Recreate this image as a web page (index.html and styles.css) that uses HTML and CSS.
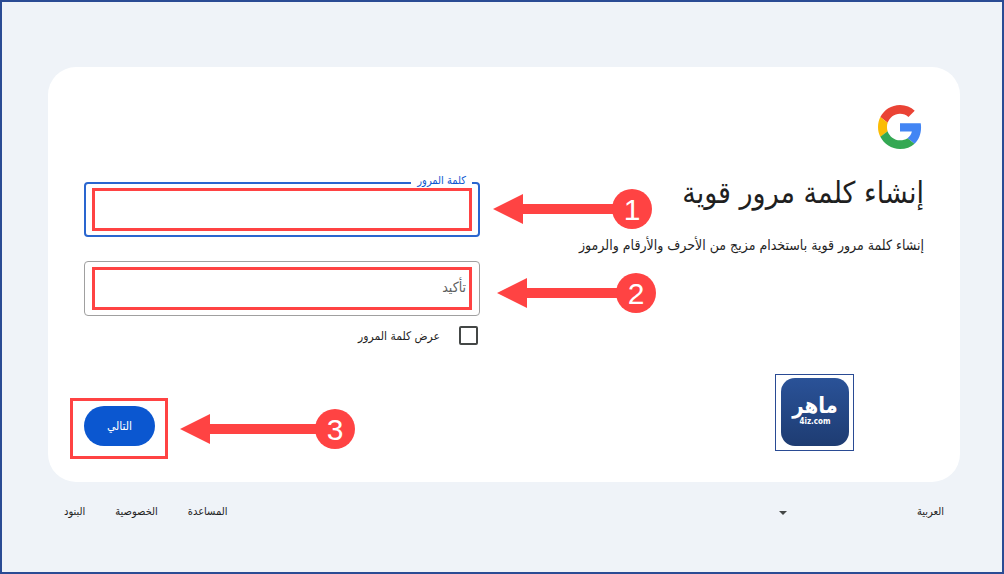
FILE: index.html
```
<!DOCTYPE html>
<html lang="ar" dir="rtl">
<head>
    <meta charset="UTF-8">
    <meta name="viewport" content="width=device-width, initial-scale=1.0">
    <title>إنشاء كلمة مرور قوية</title>
    <link rel="stylesheet" href="styles.css">
</head>
<body>
    <main class="card">
        <section class="intro">
            <svg class="google-logo" viewBox="0 0 48 48" role="img" aria-label="Google">
                <path fill="#EA4335" d="M24 9.5c3.54 0 6.71 1.22 9.21 3.6l6.85-6.85C35.9 2.38 30.47 0 24 0 14.62 0 6.51 5.38 2.56 13.22l7.98 6.19C12.43 13.72 17.74 9.5 24 9.5z"/>
                <path fill="#4285F4" d="M46.98 24.55c0-1.57-.15-3.09-.38-4.55H24v9.02h12.94c-.58 2.96-2.26 5.48-4.78 7.18l7.73 6c4.51-4.18 7.09-10.36 7.09-17.65z"/>
                <path fill="#FBBC05" d="M10.53 28.59c-.48-1.45-.76-2.99-.76-4.59s.27-3.14.76-4.59l-7.98-6.19C.92 16.46 0 20.12 0 24c0 3.88.92 7.54 2.56 10.78l7.97-6.19z"/>
                <path fill="#34A853" d="M24 48c6.48 0 11.93-2.13 15.89-5.81l-7.73-6c-2.15 1.45-4.92 2.3-8.16 2.3-6.26 0-11.57-4.22-13.47-9.91l-7.98 6.19C6.51 42.62 14.62 48 24 48z"/>
            </svg>
            <h1>إنشاء كلمة مرور قوية</h1>
            <p>إنشاء كلمة مرور قوية باستخدام مزيج من الأحرف والأرقام والرموز</p>
            <div class="brand">
                <div class="brand-tile">
                    <span class="brand-name">ماهر</span>
                    <span class="brand-url" dir="ltr">4iz.com</span>
                </div>
            </div>
        </section>

        <form class="form">
            <div class="field field-active">
                <input type="password" id="password">
                <label for="password">كلمة المرور</label>
                <span class="mark mark-input"></span>
                <div class="arrow arrow-one" dir="ltr"><i class="head"></i><i class="shaft"></i><b>1</b></div>
            </div>
            <div class="field">
                <input type="password" id="confirm">
                <label for="confirm">تأكيد</label>
                <span class="mark mark-input"></span>
                <div class="arrow arrow-two" dir="ltr"><i class="head"></i><i class="shaft"></i><b>2</b></div>
            </div>
            <div class="show">
                <input type="checkbox" id="show">
                <label for="show">عرض كلمة المرور</label>
            </div>
            <div class="actions">
                <button type="button">التالي</button>
                <span class="mark mark-button"></span>
                <div class="arrow arrow-three" dir="ltr"><i class="head"></i><i class="shaft"></i><b>3</b></div>
            </div>
        </form>
    </main>

    <footer>
        <div class="language">
            <select aria-label="اللغة">
                <option>العربية</option>
            </select>
            <i class="caret"></i>
        </div>
        <nav>
            <a href="#">المساعدة</a>
            <a href="#">الخصوصية</a>
            <a href="#">البنود</a>
        </nav>
    </footer>
</body>
</html>
```

FILE: styles.css
```
* {
    box-sizing: border-box;
}
body {
    margin: 0;
    min-height: 100vh;
    padding: 65px 42px 0 46px;
    border: 2px solid #2a4b94;
    background: #eff3f8;
    color: #1f1f1f;
    font-family: "DejaVu Sans Condensed", "DejaVu Sans", sans-serif;
    font-size: 11px;
}
button, input, select {
    font: inherit;
    color: inherit;
}

/* card */
.card {
    display: grid;
    grid-template-columns: 1fr 1fr;
    gap: 48px;
    padding: 38px 36px 31px;
    border-radius: 28px;
    background: #fff;
}
.intro {
    display: flex;
    flex-direction: column;
    align-items: flex-start;
}
.google-logo {
    width: 44px;
    height: 44px;
    margin: 0 2px;
}
h1 {
    margin: 24px 0 0;
    font-size: 30px;
    font-weight: 400;
    line-height: 40px;
    white-space: nowrap;
}
p {
    margin: 20px 0 0;
    font-size: 14px;
    line-height: 24px;
    white-space: nowrap;
}

/* brand stamp */
.brand {
    margin: 117px 70px 0;
    padding: 3px 4px 4px 5px;
    border: 1px solid #2a4b94;
}
.brand-tile {
    display: flex;
    flex-direction: column;
    align-items: center;
    width: 68px;
    height: 68px;
    padding-top: 16px;
    border-radius: 14px;
    background: linear-gradient(#2a5298, #1e3c72);
    color: #fff;
}
.brand-name {
    font-size: 22px;
    font-weight: 700;
    line-height: 24px;
}
.brand-url {
    font-size: 8px;
    font-weight: 700;
    line-height: 8px;
}

/* form */
.form {
    padding-top: 77px;
}
.field {
    position: relative;
    margin-bottom: 24px;
}
.field input {
    display: block;
    width: 100%;
    height: 55px;
    padding: 0 16px;
    border: 1px solid #a0a0a0;
    border-radius: 4px;
    background: #fff;
    font-size: 14px;
    outline: none;
}
.field label {
    position: absolute;
    top: 14px;
    right: 14px;
    color: #5f5f5f;
    font-size: 14px;
    line-height: 24px;
}
.field-active input {
    border: 2px solid #2a66cf;
}
.field-active label {
    top: -9px;
    right: 8px;
    padding: 0 6px;
    background: #fff;
    color: #0b57d0;
    font-size: 11px;
    line-height: 16px;
}
.show {
    display: flex;
    align-items: center;
    gap: 19px;
    margin-top: -14px;
    padding: 0 2px;
    line-height: 18px;
}
.show input {
    appearance: none;
    width: 19px;
    height: 19px;
    margin: 0;
    border: 2px solid #444746;
    border-radius: 2px;
}
.show label {
    font-size: 12px;
}
.actions {
    position: relative;
    display: flex;
    justify-content: flex-end;
    margin-top: 61px;
}
button {
    width: 71px;
    height: 40px;
    padding: 0;
    border: 0;
    border-radius: 20px;
    background: #0b57d0;
    color: #fff;
    font-size: 12px;
    cursor: pointer;
}

/* step marks */
.mark {
    position: absolute;
    border: 3px solid #ff4343;
    pointer-events: none;
}
.mark-input {
    inset: 6px 8px;
}
.mark-button {
    top: -8px;
    left: -14px;
    width: 98px;
    height: 61px;
}
.arrow {
    position: absolute;
    left: 100%;
    display: flex;
    align-items: center;
    width: 159px;
    height: 40px;
}
.arrow .head {
    border: 15px solid transparent;
    border-left-width: 0;
    border-right: 30px solid #ff4343;
}
.arrow .shaft {
    flex: 1;
    height: 10px;
    margin-right: -2px;
    background: #ff4343;
}
.arrow b {
    width: 40px;
    height: 40px;
    border-radius: 50%;
    background: #ff4343;
    color: #fff;
    font: 30px/42px "Liberation Sans", sans-serif;
    text-align: center;
}
.arrow-one {
    top: 7px;
    margin-left: 13px;
}
.arrow-two {
    top: 12px;
    margin-left: 17px;
}
.arrow-three {
    top: 3px;
    left: 96px;
    width: 175px;
}

/* footer */
footer {
    display: flex;
    justify-content: space-between;
    align-items: center;
    padding: 20px 16px;
    line-height: 20px;
}
.language {
    position: relative;
    width: 168px;
}
.language select {
    appearance: none;
    display: block;
    width: 100%;
    height: 20px;
    padding: 0;
    border: 0;
    background: none;
}
.caret {
    position: absolute;
    top: 9px;
    left: 3px;
    border: 4px solid transparent;
    border-top-color: #444746;
    border-bottom-width: 0;
    pointer-events: none;
}
nav {
    display: flex;
    gap: 30px;
}
nav a {
    color: inherit;
    text-decoration: none;
}
```
